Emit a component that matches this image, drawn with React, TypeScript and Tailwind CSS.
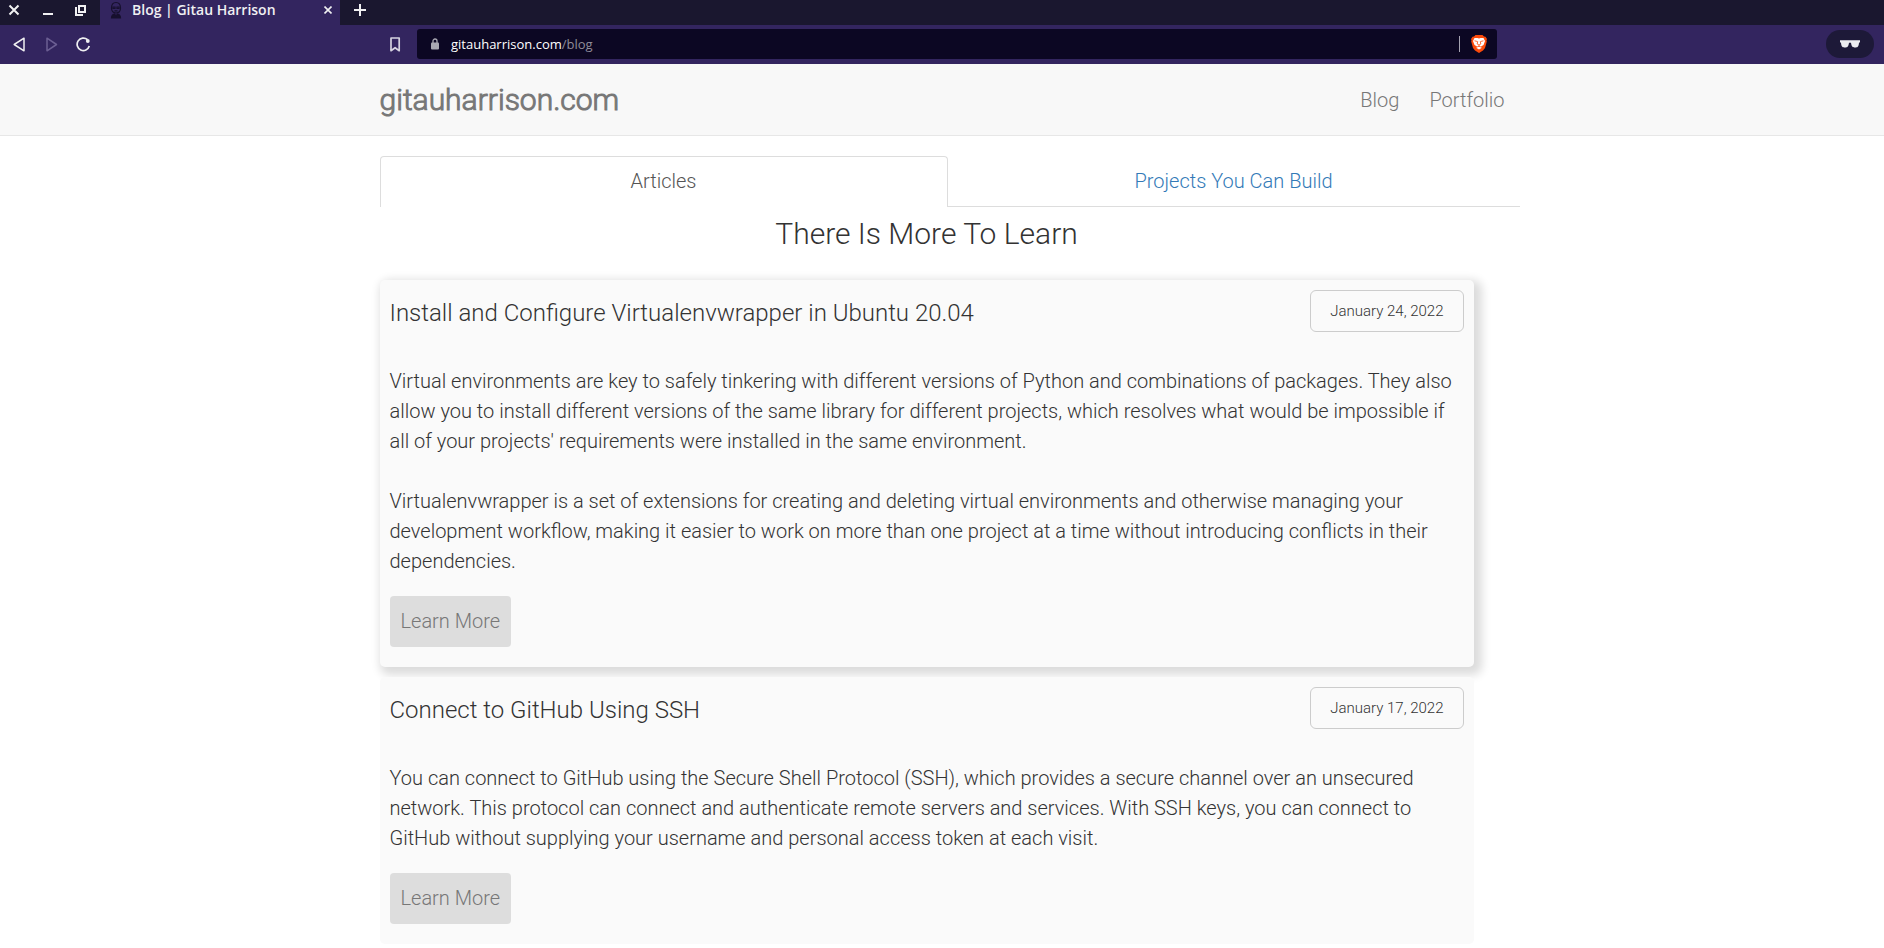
import React from "react";

type Article = { title: string; date: string; paragraphs: string[]; raised?: boolean };

const articles: Article[] = [
  {
    title: "Install and Configure Virtualenvwrapper in Ubuntu 20.04",
    date: "January 24, 2022",
    raised: true,
    paragraphs: [
      "Virtual environments are key to safely tinkering with different versions of Python and combinations of packages. They also allow you to install different versions of the same library for different projects, which resolves what would be impossible if all of your projects' requirements were installed in the same environment.",
      "Virtualenvwrapper is a set of extensions for creating and deleting virtual environments and otherwise managing your development workflow, making it easier to work on more than one project at a time without introducing conflicts in their dependencies.",
    ],
  },
  {
    title: "Connect to GitHub Using SSH",
    date: "January 17, 2022",
    paragraphs: [
      "You can connect to GitHub using the Secure Shell Protocol (SSH), which provides a secure channel over an unsecured network. This protocol can connect and authenticate remote servers and services. With SSH keys, you can connect to GitHub without supplying your username and personal access token at each visit.",
    ],
  },
];

function Favicon() {
  return (
    <svg width="12" height="18" viewBox="0 0 12 18" fill="none" stroke="#17102e" strokeWidth="1.2">
      <path d="M1.5 7C1.500 3 3.500 1.500 6 1.500S10.500 3 10.500 7 9 12 6 12 1.500 10 1.500 7Z" />
      <path d="M3 6h2v1.500H3zM7 6h2v1.500H7zM4.500 9.800h3" />
      <path d="M1.500 17c0-2 1-3.500 3-4L6 15l1.500-2c2 .5 3 2 3 4Z" fill="#17102e" />
    </svg>
  );
}

function TabStrip() {
  return (
    <div className="flex h-[25px] bg-[#1a172f] text-[#f0f0f2]">
      <div className="flex w-[100px] shrink-0 items-center gap-[22px] pb-[5px] pl-2">
        <button aria-label="Close window">
          <svg width="12" height="12" viewBox="0 0 12 12" stroke="currentColor" strokeWidth="2">
            <path d="M1.500 1.500l9 9M10.500 1.500l-9 9" />
          </svg>
        </button>
        <button aria-label="Minimize window">
          <svg width="11" height="12" viewBox="0 0 11 12" fill="currentColor">
            <path d="M1 9h10v2H1z" />
          </svg>
        </button>
        <button aria-label="Restore window">
          <svg width="11" height="11" viewBox="0 0 11 11" fill="none" stroke="currentColor" strokeWidth="2">
            <path d="M4 1h6v6H4zM1 2v8h7" />
          </svg>
        </button>
      </div>
      <div className="flex w-[240px] shrink-0 items-center bg-[#33255f] pb-[5px] pr-2 pl-[10px]">
        <Favicon />
        <span className="ml-[10px] flex-1 whitespace-nowrap text-[14px] leading-5 font-semibold">
          Blog | Gitau Harrison
        </span>
        <button aria-label="Close tab">
          <svg width="8" height="8" viewBox="0 0 8 8" stroke="currentColor" strokeWidth="1.600">
            <path d="M.5.5l7 7M7.500.5l-7 7" />
          </svg>
        </button>
      </div>
      <button aria-label="New tab" className="ml-[14px] pb-[5px]">
        <svg width="12" height="12" viewBox="0 0 12 12" fill="currentColor">
          <path d="M5 0h2v5h5v2H7v5H5V7H0V5h5z" />
        </svg>
      </button>
    </div>
  );
}

function Toolbar() {
  return (
    <div className="flex h-[39px] items-center bg-[#33255f] pr-[10px] pb-px pl-[13px] text-[#f0f0f2]">
      <div className="flex w-[376px] shrink-0 items-center">
        <button aria-label="Back">
          <svg width="13" height="15" viewBox="0 0 13 15" fill="none" stroke="currentColor" strokeWidth="1.500" strokeLinejoin="round">
            <path d="M11 1.200v12.600L1.200 7.500z" />
          </svg>
        </button>
        <button aria-label="Forward" className="ml-5 text-[#6c5f93]">
          <svg width="12" height="15" viewBox="0 0 12 15" fill="none" stroke="currentColor" strokeWidth="1.500" strokeLinejoin="round">
            <path d="M1 1.200v12.600l9.500-6.300z" />
          </svg>
        </button>
        <button aria-label="Reload" className="ml-[18px]">
          <svg width="15" height="15" viewBox="0 0 15 15" fill="none" stroke="currentColor" strokeWidth="1.700">
            <path d="M11.500 2.700A6.200 6.200 0 1 0 13.300 9" />
            <circle cx="11.800" cy="4" r="1.900" fill="currentColor" stroke="none" />
          </svg>
        </button>
      </div>
      <button aria-label="Bookmark this page">
        <svg width="12" height="15" viewBox="0 0 12 15" fill="none" stroke="#d5d2df" strokeWidth="1.700" strokeLinejoin="round">
          <path d="M2 1h8.200v12.700l-4.100-3-4.100 3z" />
        </svg>
      </button>
      <div className="ml-4 flex h-[30px] w-[1080px] items-center rounded-[3px] bg-[#0c0723] pr-[10px] pl-[14px]">
        <svg width="8" height="12" viewBox="0 0 8 12">
          <path d="M2 5V3a2 2 0 0 1 4 0v2" fill="none" stroke="#a9a8b2" strokeWidth="1.300" />
          <rect y="4.500" width="8" height="7" rx="1" fill="#a9a8b2" />
        </svg>
        <span className="ml-3 flex-1 text-[13px] leading-5 text-white">
          gitauharrison.com<span className="text-[#8f8d99]">/blog</span>
        </span>
        <span className="h-4 w-px bg-[#a5a2b1]" />
        <svg className="ml-[11px]" width="16" height="18" viewBox="0 0 16 18">
          <path d="M4.500 0h7L13 1.500l1.500.2L16 4l-.5 1.500.3 1L14 13l-2 2.500L8 18l-4-2.500L2 13 .2 6.500l.3-1L0 4l1.500-2.300L3 1.500z" fill="#fb4a0b" />
          <path d="M3.500 3h3L8 3.500 9.500 3h3L14 6l-1.500 4-2.500 1.500.5 1.500L8 14.500 5.500 13l.5-1.500L3.500 10 2 6z" fill="#fff" />
          <path d="M3.500 5.800l3 .7M12.500 5.800l-3 .7M6.700 6.500L6.200 9 8 10l1.800-1-.5-2.500M8 10v1.500M5.800 12L8 11.300l2.200.7" fill="none" stroke="#fb4a0b" strokeWidth=".8" />
        </svg>
      </div>
      <button aria-label="Private window" className="ml-auto flex h-7 w-12 items-center justify-center rounded-full bg-[#1d1938]">
        <svg width="20" height="8" viewBox="0 0 20 8" fill="#ececf0">
          <path d="M0 .3h20v1.900l-1 .5c-.1 1.800-.5 3.500-1.500 4.300-.8.600-4 .6-4.800 0-1-.8-1.500-2.500-1.700-4.300H9c-.2 1.800-.7 3.500-1.700 4.300-.8.600-4 .6-4.800 0C1.500 6.200 1.100 4.500 1 2.700l-1-.5z" />
        </svg>
      </button>
    </div>
  );
}

function SiteHeader() {
  return (
    <header className="border-b border-[#e7e7e7] bg-[#f8f8f8] pl-[15px]">
      <nav className="mx-auto flex max-w-[1140px] items-center justify-between py-[15px] text-[#777]">
        <a href="#home" className="text-[30px] leading-[41px] [-webkit-text-stroke:1px_#777]">gitauharrison.com</a>
        <div className="flex gap-[30px] pr-[15px] text-xl">
          <a href="#blog">Blog</a>
          <a href="#portfolio">Portfolio</a>
        </div>
      </nav>
    </header>
  );
}

function ArticleCard({ article }: { article: Article }) {
  return (
    <article
      className={
        "rounded-[5px] bg-[#fafafa] p-[10px] pb-5 " +
        (article.raised ? "shadow-[4px_4px_10px_4px_rgba(0,0,0,0.14)]" : "relative")
      }
    >
      <div className="flex items-start justify-between">
        <h3 className="text-2xl leading-[46px]">{article.title}</h3>
        <time className="rounded-md border border-[#ccc] px-[19px] text-[15px] leading-10 text-[#333]">
          {article.date}
        </time>
      </div>
      <div className="mt-[30px] flex flex-col gap-[30px] text-xl leading-[30px]">
        {article.paragraphs.map((text) => (
          <p key={text}>{text}</p>
        ))}
      </div>
      <a href="#article" className="mt-5 inline-block rounded-[4px] bg-[#ddd] px-[11px] text-xl leading-[51px] text-[#777]">
        Learn More
      </a>
    </article>
  );
}

export default function App() {
  return (
    <div className="min-h-screen bg-white">
      <div className="font-['Open_Sans','Noto_Sans',sans-serif]">
        <TabStrip />
        <Toolbar />
      </div>
      <div className="font-[Roboto,sans-serif] font-light text-[#333]">
        <SiteHeader />
        <main className="pt-5 pl-[15px]">
          <div className="mx-auto max-w-[1140px]">
            <div role="tablist" className="flex text-xl leading-[30px]">
              <button role="tab" aria-selected="true" className="h-[51px] w-[568px] rounded-t-[4px] border border-b-0 border-[#ddd] pb-0.5 text-[#555]">
                Articles
              </button>
              <button role="tab" aria-selected="false" className="h-[51px] flex-1 border-b border-[#ddd] text-[#337ab7]">
                Projects You Can Build
              </button>
            </div>
            <section className="pr-[46px]">
              <h2 className="pt-1.5 pb-[26px] text-center text-[30px] leading-[41px]">There Is More To Learn</h2>
              <div className="flex flex-col gap-[10px]">
                {articles.map((article) => (
                  <ArticleCard key={article.title} article={article} />
                ))}
              </div>
            </section>
          </div>
        </main>
      </div>
    </div>
  );
}
